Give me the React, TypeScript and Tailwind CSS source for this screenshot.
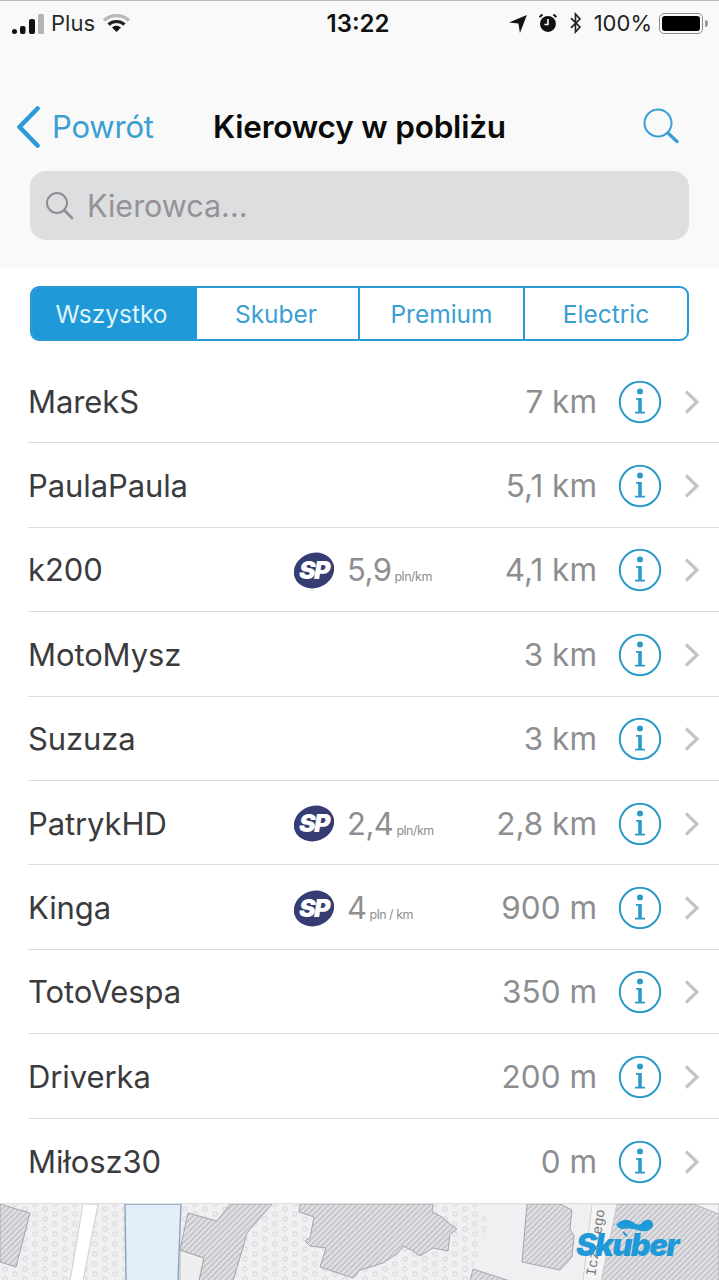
const font = "font-['Inter','Liberation_Sans',sans-serif]";

type Driver = {
  name: string;
  distance: string;
  price?: string;
  unit?: string;
};

const drivers: Driver[] = [
  { name: "MarekS", distance: "7 km" },
  { name: "PaulaPaula", distance: "5,1 km" },
  { name: "k200", distance: "4,1 km", price: "5,9", unit: "pln/km" },
  { name: "MotoMysz", distance: "3 km" },
  { name: "Suzuza", distance: "3 km" },
  { name: "PatrykHD", distance: "2,8 km", price: "2,4", unit: "pln/km" },
  { name: "Kinga", distance: "900 m", price: "4", unit: "pln / km" },
  { name: "TotoVespa", distance: "350 m" },
  { name: "Driverka", distance: "200 m" },
  { name: "Miłosz30", distance: "0 m" },
];

function StatusBar() {
  return (
    <div className="flex h-[47px] items-start justify-between border-t border-[#b9b9c0] pl-[12px] pr-[11px] pt-[9px] text-[#1a1a1a]">
      <div className="mt-[1px] flex w-[200px] items-center">
        <svg width="32" height="22" viewBox="0 0 32 22" className="mr-[7px]">
          <rect x="0" y="17" width="5" height="5" rx="2.5" fill="#111" />
          <rect x="8" y="14" width="5.5" height="8" rx="2" fill="#111" />
          <rect x="17" y="7" width="6" height="15" rx="2" fill="#111" />
          <rect x="26" y="2" width="6" height="20" rx="1.5" fill="#b4b4b4" />
        </svg>
        <span className="text-[22px] leading-[24px] text-[#2a2a2a]">Plus</span>
        <svg width="28" height="20" viewBox="0 0 28 20" className="ml-[8px]">
          <path d="M1 7.5C8 1 19 1 26 7.5" fill="none" stroke="#b8b8b8" strokeWidth="3.4" />
          <path d="M5.5 11.5C10 7.5 17 7.5 21.5 11.5" fill="none" stroke="#222" strokeWidth="3.2" />
          <path d="M9 14.5C12 12 15 12 18 14.5L13.5 19Z" fill="#111" />
        </svg>
      </div>
      <span className="mr-[4px] text-[24px] font-semibold leading-[28px] text-[#111]">13:22</span>
      <div className="mt-[1px] flex w-[200px] items-center justify-end">
        <svg width="20" height="20" viewBox="0 0 20 20">
          <path d="M1 9.5 19 2 12 20 10.5 10.5Z" fill="#111" />
        </svg>
        <svg width="22" height="22" viewBox="0 0 22 22" className="ml-[9px]">
          <circle cx="11" cy="12" r="8" fill="#111" />
          <path d="M11 7v5.5H7.5" fill="none" stroke="#fff" strokeWidth="1.6" />
          <path d="M2.5 5 5.5 2.5M19.5 5 16.5 2.5" stroke="#111" strokeWidth="2" />
        </svg>
        <svg width="14" height="22" viewBox="0 0 14 22" className="ml-[10px]">
          <path d="M2 6 11 15 6.5 20V2L11 7 2 16" fill="none" stroke="#222" strokeWidth="1.7" />
        </svg>
        <span className="ml-[11px] text-[22px] leading-[24px] text-[#222]">100%</span>
        <div className="ml-[7px] flex items-center">
          <div className="h-[21px] w-[44px] rounded-[5px] border border-[#8d8d8d] p-[2px]">
            <div className="h-full w-full rounded-[3px] bg-black" />
          </div>
          <div className="ml-[2px] h-[7px] w-[3px] rounded-r-sm bg-[#9a9a9a]" />
        </div>
      </div>
    </div>
  );
}

function NavBar() {
  return (
    <div className="mt-[56px] flex h-[48px] items-center pl-[16px]">
      <svg width="24" height="42" viewBox="0 0 24 42">
        <path d="M21.5 2.5 3.5 21l18 18.5" fill="none" stroke="#2c9ad6" strokeWidth="4.6" strokeLinecap="round" strokeLinejoin="round" />
      </svg>
      <span className="ml-[12px] w-[161px] text-[31px] leading-[40px] tracking-[-0.2px] text-[#3a9fd2]">Powrót</span>
      <span className="text-[31.5px] font-semibold leading-[40px] tracking-[-0.2px] text-[#0a0a0a]">Kierowcy w pobliżu</span>
      <svg width="38" height="38" viewBox="0 0 38 38" className="ml-[136px]">
        <circle cx="16" cy="15" r="13.5" fill="none" stroke="#3a9fd2" strokeWidth="2" />
        <path d="M26 25 35 33.5" stroke="#3a9fd2" strokeWidth="3.4" strokeLinecap="round" />
      </svg>
    </div>
  );
}

function SearchBox() {
  return (
    <div className="mx-[30px] mt-[20px] flex h-[69px] items-center rounded-[16px] bg-[#dddee0] pl-[15px]">
      <svg width="28" height="30" viewBox="0 0 28 30">
        <circle cx="12" cy="12" r="10" fill="none" stroke="#8e8e93" strokeWidth="2" />
        <path d="M19.5 19.5 27 27" stroke="#8e8e93" strokeWidth="2.6" strokeLinecap="round" />
      </svg>
      <span className="ml-[14px] text-[30.5px] leading-[40px] text-[#939397]">Kierowca...</span>
    </div>
  );
}

function Tabs() {
  return (
    <div className="mx-[30px] mt-[18px] flex h-[55px] rounded-[9px] border-[2.5px] border-[#2a9ad6] text-[24.5px] leading-none text-[#3a9fd2]">
      <div className="flex w-[165px] items-center justify-center rounded-l-[6px] bg-[#1f99d8] pr-[6px] pt-[1px] text-[#dff3fb]">Wszystko</div>
      <div className="flex w-[163px] items-center justify-center border-r-2 border-[#2a9ad6] pr-[3px] pt-[1px]">Skuber</div>
      <div className="flex w-[165px] items-center justify-center border-r-2 border-[#2a9ad6] pt-[1px]">Premium</div>
      <div className="flex flex-1 items-center justify-center pt-[1px]">Electric</div>
    </div>
  );
}

function SpBadge() {
  return (
    <div className="relative flex h-[37px] w-[40px] items-center justify-center">
      <svg width="40" height="37" viewBox="0 0 40 37" className="absolute inset-0">
        <ellipse cx="20" cy="18.5" rx="20.5" ry="17.5" transform="rotate(-20 20 18.5)" fill="#353d73" />
      </svg>
      <span className="relative text-[25px] font-black italic leading-none tracking-[-1.5px] text-white">SP</span>
    </div>
  );
}

function Row({ driver, last }: { driver: Driver; last: boolean }) {
  return (
    <div className={`ml-[28px] flex h-[84.4px] items-center pt-[2px] ${last ? "" : "border-b border-[#dcdcdc]"}`}>
      <span className="w-[266px] text-[31px] leading-[40px] tracking-[-0.1px] text-[#3b3b3d]">{driver.name}</span>
      <div className="flex flex-1 items-center">
        {driver.price && (
          <>
            <SpBadge />
            <span className="ml-[13px] text-[31px] leading-[40px] tracking-[-0.5px] text-[#8e8e90]">{driver.price}</span>
            <span className="ml-[3px] mt-[14px] text-[12.5px] leading-[16px] tracking-[-0.5px] text-[#8e8e90]">{driver.unit}</span>
          </>
        )}
      </div>
      <span className="text-[31.5px] leading-[40px] text-[#8e8e90]">{driver.distance}</span>
      <svg width="44" height="44" viewBox="0 0 44 44" className="ml-[21px]">
        <circle cx="22" cy="22" r="20.2" fill="none" stroke="#2c9ac9" strokeWidth="2" />
        <circle cx="22" cy="11.5" r="3" fill="#2c9ac9" />
        <path d="M18 18H23.8V31.7H27V33.5H17V31.7H20.2V19.8H18Z" fill="#2c9ac9" />
      </svg>
      <svg width="18" height="26" viewBox="0 0 18 26" className="ml-[21px] mr-[18px]">
        <path d="M3 2.5 14 13 3 23.5" fill="none" stroke="#c4c4c6" strokeWidth="3.2" />
      </svg>
    </div>
  );
}

function MapStrip() {
  return (
    <div className="relative h-[77px] overflow-hidden border-t border-[#dedede] bg-[#f0eff1]">
      <svg width="719" height="77" viewBox="0 0 719 77" className="block">
        <defs>
          <pattern id="dots" width="20" height="20" patternUnits="userSpaceOnUse">
            <circle cx="5" cy="5" r="2.2" fill="none" stroke="#dddbdd" strokeWidth="1.2" />
            <circle cx="15" cy="10" r="2.2" fill="none" stroke="#dddbdd" strokeWidth="1.2" />
            <circle cx="5" cy="15" r="2.2" fill="none" stroke="#dddbdd" strokeWidth="1.2" />
            <circle cx="15" cy="0" r="2.2" fill="none" stroke="#dddbdd" strokeWidth="1.2" />
            <circle cx="15" cy="20" r="2.2" fill="none" stroke="#dddbdd" strokeWidth="1.2" />
          </pattern>
          <pattern id="hatch" width="4" height="4" patternUnits="userSpaceOnUse" patternTransform="rotate(45)">
            <rect width="4" height="4" fill="#e2e2e5" />
            <rect width="2" height="4" fill="#c6c7cc" />
          </pattern>
        </defs>
        <path d="M0 0H480L488 20 473 65 470 77H0Z" fill="url(#dots)" />
        <path d="M0 0 30 9 16 63 0 58Z" fill="url(#hatch)" stroke="#a4a6ae" />
        <path d="M83 0H98L83 77H70Z" fill="#fff" stroke="#cfcfd2" />
        <path d="M125 0H181L178 77H126Z" fill="#e1edf9" stroke="#8ea2b5" strokeWidth="1.4" />
        <path d="M180 46 204 54 199 77H180Z" fill="#efefef" stroke="#b5b6bb" />
        <path d="M188 9 217 17 230 0H272L247 29 241 50 233 77H199L204 54 180 46Z" fill="url(#hatch)" stroke="#a4a6ae" />
        <path d="M300 0 299 8 314 13 310 34 305 37 310 42 326 44 320 63 353 74 360 66 383 59 398 49 403 42 413 47 420 52 433 44 448 47 450 30 457 25 450 20 442 13 432 8 433 0Z" fill="url(#hatch)" stroke="#a4a6ae" />
        <path d="M527 0H560L572 6 570 25 574 32 572 53 560 66 522 58Z" fill="url(#hatch)" stroke="#a4a6ae" />
        <path d="M617 0H719V77H601Z" fill="url(#hatch)" stroke="#a4a6ae" />
        <path d="M473 65 510 77H470Z" fill="url(#hatch)" stroke="#a4a6ae" />
        <path d="M592 0H617L601 77H583Z" fill="#f4f4f5" stroke="#cfcfd2" />
        <path d="M693 0 719 10V0Z" fill="#f4f4f5" stroke="#b5b6bb" />
      </svg>
      <span className="absolute left-[589px] top-[5px] rotate-[188deg] font-['Liberation_Mono',monospace] text-[14px] leading-none text-[#77787c] [writing-mode:vertical-rl]">Iczkiego</span>
      <svg width="38" height="18" viewBox="0 0 46 22" className="absolute left-[616px] top-[15px]">
        <path d="M0 7C6 0 14-1 21 4 25 7 29 8 31 5 36-1 44 0 45 6 46 13 36 17 28 14 22 12 15 11 10 12 6 13 2 11 0 7Z" fill="#1f99d8" />
        <path d="M8 15C12 17 14 19 14 22 10 21 8 18 8 15Z" fill="#1f99d8" />
      </svg>
      <span className="absolute left-[576px] top-[24px] text-[31px] font-black italic leading-[34px] tracking-[-1.6px] text-[#1f99d8]">Skuber</span>
    </div>
  );
}

export default function App() {
  return (
    <div className={`flex h-[1280px] w-[719px] flex-col overflow-hidden bg-white ${font}`}>
      <div className="h-[268px] bg-[#f9f9f9]">
        <StatusBar />
        <NavBar />
        <SearchBox />
      </div>
      <Tabs />
      <div className="mt-[18px]">
        {drivers.map((driver, i) => (
          <Row key={driver.name} driver={driver} last={i === drivers.length - 1} />
        ))}
      </div>
      <MapStrip />
    </div>
  );
}
